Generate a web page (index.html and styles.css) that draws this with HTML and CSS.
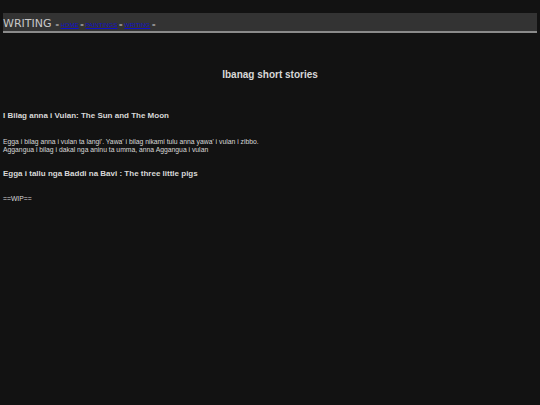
FILE: index.html
```html
<!DOCTYPE html>
<html lang="en">
  <head>
    <meta charset="UTF-8" />
    <title>Writing</title>
    <link rel="stylesheet" href="styles.css">
  </head>
  <body>
    <div class="top-bar">
      <span class="site-title">WRITING</span>
      <span class="nav">
        = <a href="index.html">HOME</a>
        = <a href="paintings.html">PAINTINGS</a>
        = <a href="writing.html">WRITING</a> =
      </span>
    </div>

    <main>
      <h1>Ibanag short stories</h1>

      <h3>I Bilag anna i Vulan: The Sun and The Moon</h3>
      <p class="story">Egga i bilag anna i vulan ta langi'. Yawa' i bilag nikami tulu anna yawa' i vulan i zibbo.<br>
      Aggangua i bilag i dakal nga aninu ta umma, anna Aggangua i vulan</p>

      <h3 class="next">Egga i tallu nga Baddi na Bavi : The three little pigs</h3>
      <p class="wip">==WIP==</p>
    </main>
  </body>
</html>
```

FILE: styles.css
```css
body {
  margin: 0;
  padding: 13px 3px;
  background-color: #121212;
  color: #d8d8d8;
  font-family: "Liberation Sans", Arial, sans-serif;
}

.top-bar {
  display: flex;
  align-items: baseline;
  gap: 4px;
  background-color: #333;
  border-bottom: 2px solid #8a8a8a;
  height: 18px;
  padding: 0;
}

.site-title {
  font-family: "DejaVu Sans", Verdana, sans-serif;
  font-size: 11px;
  line-height: 21px;
  color: #c8c8c8;
}

.nav {
  font-size: 6px;
  color: #ccc;
}

.nav a {
  color: #1010c8;
}

main h1 {
  text-align: center;
  font-size: 10px;
  line-height: 12px;
  margin: 36px 0 0;
}

main h3 {
  font-size: 8px;
  line-height: 10px;
  margin: 30px 0 0;
}

main p {
  font-size: 6.8px;
  line-height: 8px;
  margin: 0;
}

main .story {
  margin-top: 17px;
}

main .next {
  margin-top: 15px;
}

main .wip {
  margin-top: 16px;
}
```
